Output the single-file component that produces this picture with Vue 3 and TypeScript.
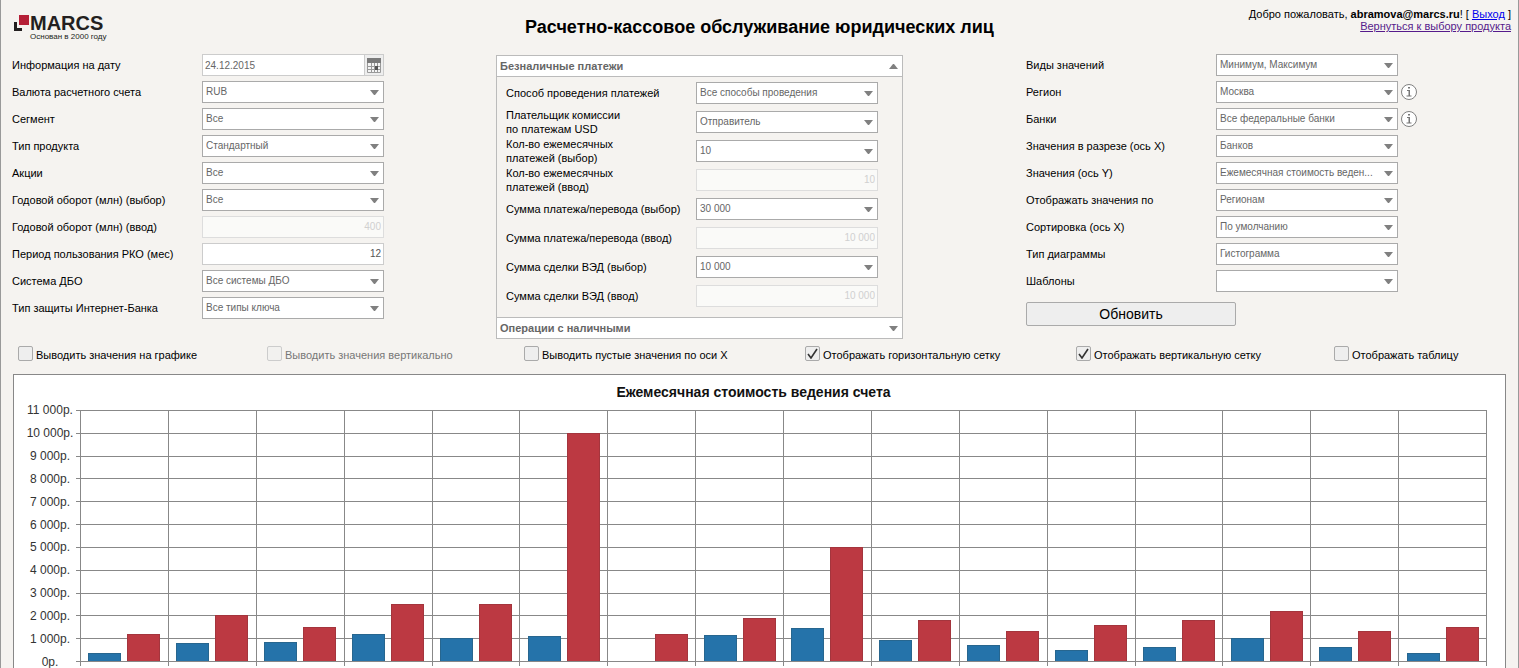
<script setup lang="ts">
import { ref } from 'vue'

interface Field {
  id: string
  label: string
  kind: 'select' | 'input' | 'date'
  value: string
  disabled?: boolean
  info?: boolean
}

const select = (id: string, label: string, value: string, info = false): Field => ({ id, label, kind: 'select', value, info })
const input = (id: string, label: string, value: string, disabled = true): Field => ({ id, label, kind: 'input', value, disabled })

const accountFields: Field[] = [
  { id: 'date', label: 'Информация на дату', kind: 'date', value: '24.12.2015' },
  select('currency', 'Валюта расчетного счета', 'RUB'),
  select('segment', 'Сегмент', 'Все'),
  select('product', 'Тип продукта', 'Стандартный'),
  select('promo', 'Акции', 'Все'),
  select('turnover', 'Годовой оборот (млн) (выбор)', 'Все'),
  input('turnover-in', 'Годовой оборот (млн) (ввод)', '400'),
  input('period', 'Период пользования РКО (мес)', '12', false),
  select('dbo', 'Система ДБО', 'Все системы ДБО'),
  select('key', 'Тип защиты Интернет-Банка', 'Все типы ключа'),
]

const paymentFields: Field[] = [
  select('method', 'Способ проведения платежей', 'Все способы проведения'),
  select('payer', 'Плательщик комиссии\nпо платежам USD', 'Отправитель'),
  select('count', 'Кол-во ежемесячных\nплатежей (выбор)', '10'),
  input('count-in', 'Кол-во ежемесячных\nплатежей (ввод)', '10'),
  select('sum', 'Сумма платежа/перевода (выбор)', '30 000'),
  input('sum-in', 'Сумма платежа/перевода (ввод)', '10 000'),
  select('ved', 'Сумма сделки ВЭД (выбор)', '10 000'),
  input('ved-in', 'Сумма сделки ВЭД (ввод)', '10 000'),
]

const viewFields: Field[] = [
  select('kinds', 'Виды значений', 'Минимум, Максимум'),
  select('region', 'Регион', 'Москва', true),
  select('banks', 'Банки', 'Все федеральные банки', true),
  select('axis-x', 'Значения в разрезе (ось X)', 'Банков'),
  select('axis-y', 'Значения (ось Y)', 'Ежемесячная стоимость веден...'),
  select('group', 'Отображать значения по', 'Регионам'),
  select('sort', 'Сортировка (ось X)', 'По умолчанию'),
  select('chart', 'Тип диаграммы', 'Гистограмма'),
  select('templates', 'Шаблоны', ''),
]

const columns = [
  { name: 'account', fields: accountFields },
  { name: 'payments', fields: paymentFields },
  { name: 'view', fields: viewFields },
]

const options = ref([
  { id: 'opt-values', label: 'Выводить значения на графике', checked: false, disabled: false },
  { id: 'opt-vertical', label: 'Выводить значения вертикально', checked: false, disabled: true },
  { id: 'opt-empty', label: 'Выводить пустые значения по оси X', checked: false, disabled: false },
  { id: 'opt-hgrid', label: 'Отображать горизонтальную сетку', checked: true, disabled: false },
  { id: 'opt-vgrid', label: 'Отображать вертикальную сетку', checked: true, disabled: false },
  { id: 'opt-table', label: 'Отображать таблицу', checked: false, disabled: false },
])

const maxValue = 11000
const ticks = ['11 000р.', '10 000р.', '9 000р.', '8 000р.', '7 000р.', '6 000р.', '5 000р.', '4 000р.', '3 000р.', '2 000р.', '1 000р.', '0р.']
const series: [number, number][] = [
  [350, 1200], [800, 2000], [850, 1500], [1200, 2500], [1000, 2500], [1100, 10000],
  [0, 1200], [1150, 1900], [1450, 5000], [920, 1800], [700, 1300], [500, 1600],
  [620, 1800], [1000, 2200], [620, 1300], [350, 1500],
]
const barHeight = (value: number) => ({ height: `${(value / maxValue) * 100}%` })
</script>

<template>
  <div class="page">
    <header class="header">
      <div class="logo">
        <svg class="logo-mark" width="16" height="17" viewBox="0 0 16 17" aria-hidden="true">
          <rect x="5" width="10" height="10" fill="#b51f37" />
          <path d="M0 7h3v6h5v3H0z" fill="#231f20" />
        </svg>
        <div>
          <div class="logo-name">MARCS</div>
          <div class="logo-note">Основан в 2000 году</div>
        </div>
      </div>
      <h1 class="title">Расчетно-кассовое обслуживание юридических лиц</h1>
      <div class="user">
        <div>Добро пожаловать, <b>abramova@marcs.ru</b>! [ <a href="#logout">Выход</a> ]</div>
        <a class="visited" href="#products">Вернуться к выбору продукта</a>
      </div>
    </header>

    <main>
      <form class="filters" @submit.prevent>
        <section v-for="column in columns" :key="column.name" class="column" :class="column.name">
          <button v-if="column.name === 'payments'" type="button" class="section-head">
            <span>Безналичные платежи</span>
            <svg width="9" height="5" viewBox="0 0 9 5" aria-hidden="true"><path d="M0 5L4 0h1l4 5z" fill="#808080" /></svg>
          </button>
          <div class="fields">
            <div v-for="field in column.fields" :key="field.id" class="field">
              <label :for="field.id">{{ field.label }}</label>
              <div v-if="field.kind === 'select'" class="control select">
                <select :id="field.id"><option>{{ field.value }}</option></select>
                <svg class="arrow" width="9" height="5" viewBox="0 0 9 5" aria-hidden="true"><path d="M0 0h9L5 5H4z" fill="#808080" /></svg>
              </div>
              <div v-else-if="field.kind === 'date'" class="control date">
                <input :id="field.id" type="text" :value="field.value" />
                <button type="button" aria-label="Календарь">
                  <svg width="14" height="15" viewBox="0 0 14 15" aria-hidden="true">
                    <rect width="14" height="15" fill="#f4f4f4" />
                    <path d="M.5 4v10.500h13V4M0 8.500h14M0 11.500h14M4.500 4v11M7.500 4v11M10.500 4v11" fill="none" stroke="#999" />
                    <path d="M0 0h14v5H0z" fill="#7a7a7a" />
                    <path d="M8 8h3v4H8z" fill="#555" />
                  </svg>
                </button>
              </div>
              <input v-else :id="field.id" class="control number" type="text" :value="field.value" :disabled="field.disabled" />
              <button v-if="field.info" type="button" class="info" aria-label="Информация">
                <svg width="16" height="16" viewBox="0 0 16 16" aria-hidden="true">
                  <circle cx="8" cy="8" r="7.500" fill="#fff" stroke="#808080" />
                  <path d="M7 3h2v1.500H7zM6 6h3v5.500h1.500v1H5.500v-1h2V7H6z" fill="#777" />
                </svg>
              </button>
            </div>
          </div>
          <button v-if="column.name === 'payments'" type="button" class="section-head closed">
            <span>Операции с наличными</span>
            <svg width="9" height="5" viewBox="0 0 9 5" aria-hidden="true"><path d="M0 0h9L5 5H4z" fill="#808080" /></svg>
          </button>
          <button v-if="column.name === 'view'" type="submit" class="refresh">Обновить</button>
        </section>
      </form>

      <div class="options">
        <label v-for="option in options" :key="option.id" :for="option.id" class="option" :class="{ off: option.disabled }">
          <span class="box">
            <input :id="option.id" v-model="option.checked" type="checkbox" :disabled="option.disabled" />
            <svg v-if="option.checked" width="11" height="11" viewBox="0 0 11 11" aria-hidden="true">
              <path d="M1 6l3 4L10 1" fill="none" stroke="#333" stroke-width="1.600" />
            </svg>
          </span>
          <span>{{ option.label }}</span>
        </label>
      </div>

      <section class="chart">
        <h2>Ежемесячная стоимость ведения счета</h2>
        <div class="chart-body">
          <div class="y-axis">
            <span v-for="tick in ticks" :key="tick">{{ tick }}</span>
          </div>
          <div class="plot">
            <div class="rows"><i v-for="n in 11" :key="n"></i></div>
            <div class="groups">
              <div v-for="(pair, index) in series" :key="index" class="group">
                <div class="bars">
                  <div class="bar low" :class="{ none: !pair[0] }" :style="barHeight(pair[0])"></div>
                  <div class="bar high" :style="barHeight(pair[1])"></div>
                </div>
              </div>
            </div>
          </div>
        </div>
      </section>
    </main>
  </div>
</template>

<style>
body {
  background: #f5f3f0;
}
</style>

<style scoped>
* {
  box-sizing: border-box;
}
.page {
  display: flex;
  flex-direction: column;
  min-height: 100vh;
  border: solid #999;
  border-width: 0 1px;
  background: #f5f3f0;
  color: #000;
  font: 11px/14px "Liberation Sans", Arial, sans-serif;
}
button,
input,
select {
  margin: 0;
  font-family: inherit;
}
main {
  display: flex;
  flex: 1;
  flex-direction: column;
}
.header {
  display: grid;
  grid-template-columns: 1fr auto 1fr;
  height: 54px;
  padding: 0 7px;
}
.logo {
  display: flex;
  padding: 15px 0 0 6px;
  color: #231f20;
}
.logo-name {
  font-size: 20px;
  font-weight: bold;
  line-height: 17px;
}
.logo-note {
  font-size: 8px;
  line-height: 10px;
}
.title {
  margin: 0;
  padding-top: 16px;
  font-size: 18px;
  line-height: 22px;
}
.user {
  padding-top: 8px;
  text-align: right;
  line-height: 12px;
}
.user a {
  color: #00e;
}
.user a.visited {
  color: #551a8b;
}
.filters {
  display: grid;
  grid-template-columns: 484px 530px 1fr;
  padding-left: 11px;
  height: 286px;
}
.column {
  display: flex;
  flex-direction: column;
  align-items: flex-start;
}
.fields {
  display: flex;
  flex-direction: column;
  gap: 5px;
}
.field {
  display: grid;
  grid-template-columns: 190px 182px auto;
  grid-template-rows: 22px;
  align-items: center;
}
.field label {
  white-space: pre-line;
}
.payments {
  align-self: start;
  width: 407px;
  margin-top: 1px;
  border: 1px solid #bbb;
}
.payments .fields {
  gap: 7px;
  padding: 5px 9px 10px;
}
.section-head {
  display: flex;
  align-items: center;
  justify-content: space-between;
  width: 100%;
  height: 21px;
  padding: 0 4px 0 3px;
  border: solid #bbb;
  border-width: 0 0 1px;
  background: #fff;
  color: #666;
  font-size: 11px;
  font-weight: bold;
}
.section-head.closed {
  border-width: 1px 0 0;
}
.control {
  width: 182px;
  height: 22px;
}
.select {
  display: grid;
  align-items: center;
}
.select > * {
  grid-area: 1 / 1;
}
.select select {
  width: 100%;
  height: 22px;
  padding: 0 16px 2px 3px;
  border: 1px solid #aaa;
  border-radius: 0;
  background: #fff;
  color: #666;
  font-size: 10px;
  appearance: none;
}
.arrow {
  justify-self: end;
  margin-right: 5px;
  pointer-events: none;
}
.date {
  display: flex;
  border: 1px solid #ccc;
}
.date input {
  flex: 1;
  min-width: 0;
  padding: 0 2px;
  border: 0;
  background: #fff;
  color: #666;
  font-size: 10px;
}
.date button {
  display: grid;
  place-items: center;
  width: 19px;
  padding: 0;
  border: 0;
  border-left: 1px solid #ccc;
  background: #eee;
}
.number {
  padding: 0 2px 1px;
  border: 1px solid #ccc;
  background: #fff;
  color: #555;
  font-size: 10px;
  text-align: right;
}
.number:disabled {
  border-color: #ddd;
  background: #fafaf8;
  color: #d0d0d0;
}
.info {
  display: grid;
  width: 16px;
  height: 16px;
  margin-left: 3px;
  padding: 0;
  border: 0;
  background: none;
}
.refresh {
  width: 210px;
  height: 24px;
  margin-top: 10px;
  padding: 0;
  border: 1px solid #aaa;
  border-radius: 2px;
  background: #eee;
  color: #000;
  font-size: 14px;
}
.options {
  display: grid;
  grid-template-columns: 249fr 257fr 281fr 271fr 258fr 125px;
  padding: 6px 59px 0 17px;
  height: 34px;
}
.option {
  display: flex;
  gap: 3px;
  height: 16px;
  align-items: flex-start;
  white-space: nowrap;
}
.option > span:last-child {
  padding-top: 2px;
}
.option.off {
  color: #777;
}
.box {
  display: grid;
  place-items: center;
}
.box > * {
  grid-area: 1 / 1;
}
.box svg {
  pointer-events: none;
}
.box input {
  width: 15px;
  height: 15px;
  border: 1px solid #aaa;
  border-radius: 2px;
  background: #eee;
  appearance: none;
}
.off .box input {
  border-color: #ccc;
  background: #f2f1ef;
}
.chart {
  flex: 1;
  margin: 0 12px;
  padding: 8px 18px 0 10px;
  border: 1px solid #888;
  border-bottom: 0;
  background: #fff;
}
.chart h2 {
  margin: 0 0 9px;
  padding-right: 4px;
  color: #111;
  font-size: 14px;
  line-height: 18px;
  text-align: center;
}
.chart-body {
  display: grid;
  grid-template-columns: 52px 1fr;
  height: 252px;
}
.y-axis {
  display: flex;
  flex-direction: column;
  justify-content: space-between;
  margin: -6px 0;
  color: #333;
  font-size: 12px;
  line-height: 12px;
  text-align: center;
}
.plot {
  display: grid;
  grid-template-rows: 252px;
}
.plot > * {
  grid-area: 1 / 1;
}
.rows {
  display: flex;
  flex-direction: column;
  border-bottom: 1px solid #888;
}
.rows i {
  flex: 1;
  border-top: 1px solid #888;
}
.groups {
  display: grid;
  grid-template-columns: repeat(16, 1fr);
  height: 256px;
  margin-left: 4px;
  border-left: 1px solid #888;
}
.group {
  padding-bottom: 5px;
  border-right: 1px solid #888;
}
.bars {
  display: flex;
  align-items: flex-end;
  justify-content: center;
  gap: 6px;
  height: 100%;
}
.bar {
  width: 33px;
}
.low {
  border: 1px solid #27668f;
  background: #2573aa;
}
.high {
  border: 1px solid #a4353d;
  background: #bc3942;
}
.bar {
  border-bottom: 0;
}
.none {
  visibility: hidden;
}
</style>
